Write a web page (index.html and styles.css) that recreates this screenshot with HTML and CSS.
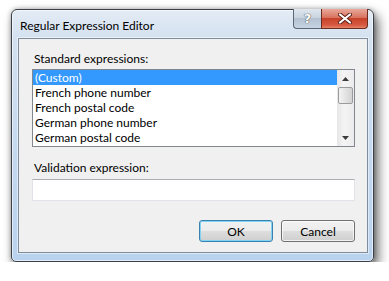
FILE: index.html
```html
<!DOCTYPE html>
<html lang="en">
<head>
    <meta charset="UTF-8">
    <meta name="viewport" content="width=device-width, initial-scale=1.0">
    <title>Regular Expression Editor</title>
    <link rel="stylesheet" href="styles.css">
</head>
<body>
    <div class="window">
        <div class="titlebar">
            <span class="title">Regular Expression Editor</span>
            <div class="caption-buttons">
                <div class="cap help">?</div>
                <div class="cap close">
                    <svg width="14" height="11" viewBox="0 0 14 11">
                        <path d="M2 1.5 L12 9.5 M12 1.5 L2 9.5" stroke="#5a1f14" stroke-width="4" stroke-linecap="round"/>
                        <path d="M2 1.5 L12 9.5 M12 1.5 L2 9.5" stroke="#ffffff" stroke-width="2.2" stroke-linecap="round"/>
                    </svg>
                </div>
            </div>
        </div>
        <div class="client">
            <div class="field-label">Standard expressions:</div>
            <div class="listbox">
                <ul class="items">
                    <li class="selected">(Custom)</li>
                    <li>French phone number</li>
                    <li>French postal code</li>
                    <li>German phone number</li>
                    <li>German postal code</li>
                </ul>
                <div class="scrollbar">
                    <div class="arrow">
                        <svg width="7" height="4" viewBox="0 0 7 4"><path d="M0 4 L3.5 0 L7 4 Z" fill="#3b3b3b"/></svg>
                    </div>
                    <div class="thumb"></div>
                    <div class="track"></div>
                    <div class="arrow">
                        <svg width="7" height="4" viewBox="0 0 7 4"><path d="M0 0 L7 0 L3.5 4 Z" fill="#3b3b3b"/></svg>
                    </div>
                </div>
            </div>
            <div class="field-label second">Validation expression:</div>
            <input class="textbox" type="text">
            <div class="actions">
                <button class="btn default">OK</button>
                <button class="btn">Cancel</button>
            </div>
        </div>
    </div>
</body>
</html>
```

FILE: styles.css
```css
body {
    margin: 0;
    background: #ffffff;
    font-family: "Segoe UI", Lato, sans-serif;
    font-size: 12px;
    color: #000000;
}
.window {
    box-sizing: border-box;
    width: 363px;
    height: 253px;
    margin: 9px 0 0 11px;
    padding: 0 5px 8px 6px;
    border: 1px solid #3a4049;
    border-radius: 6px 6px 5px 5px;
    background: linear-gradient(to bottom, #e4ebf4 0, #d3e1f0 28px, #c3d8ef 60%, #b9d2ee 100%);
    box-shadow: inset 0 0 0 1px rgba(255, 255, 255, 0.6), 4px 6px 12px rgba(0, 0, 0, 0.6), 0 0 5px rgba(0, 0, 0, 0.3);
}
.titlebar {
    display: flex;
    height: 28px;
}
.title {
    flex: 1;
    padding: 8px 0 0 2px;
    line-height: 15px;
    color: #000000;
}
.caption-buttons {
    display: flex;
    align-self: flex-start;
    margin-top: -1px;
}
.cap {
    box-sizing: border-box;
    height: 20px;
    border: 1px solid #5b6775;
    border-top: none;
    display: flex;
    align-items: center;
    justify-content: center;
}
.help {
    width: 28px;
    border-right: none;
    border-radius: 0 0 0 4px;
    background: linear-gradient(to bottom, #dfe6ee 0, #c9d4e0 45%, #b3c1d1 50%, #c6d4e3 100%);
    color: #ffffff;
    font-family: "DejaVu Sans", sans-serif;
    font-size: 13px;
    font-weight: bold;
    text-shadow: 0 0 1px #444444, 0 0 1px #444444;
}
.close {
    width: 47px;
    border-radius: 0 0 4px 0;
    border-color: #6d2a1e;
    background: linear-gradient(to bottom, #e9a99b 0, #d9735f 45%, #c7432b 50%, #d75a3f 85%, #e6866b 100%);
}
.client {
    box-sizing: border-box;
    height: 215px;
    border: 1px solid #7f8c9d;
    background: #f0f0f0;
    padding: 12px 12px 10px 13px;
    box-shadow: 0 0 0 1px rgba(255, 255, 255, 0.5);
}
.field-label {
    line-height: 15px;
    padding-left: 2px;
}
.field-label.second {
    margin-top: 13px;
}
.listbox {
    display: flex;
    box-sizing: border-box;
    height: 78px;
    margin-top: 3px;
    border: 1px solid #828790;
    background: #ffffff;
}
.items {
    flex: 1;
    list-style: none;
    margin: 0;
    padding: 0;
}
.items li {
    height: 15px;
    line-height: 15px;
    padding-left: 2px;
}
.items li.selected {
    background: #3399ff;
    color: #ffffff;
}
.scrollbar {
    display: flex;
    flex-direction: column;
    width: 17px;
    background: linear-gradient(to right, #e6e6e6, #f4f4f4 40%, #ececec);
}
.arrow {
    height: 17px;
    display: flex;
    align-items: center;
    justify-content: center;
}
.thumb {
    box-sizing: border-box;
    height: 17px;
    margin: 0 1px;
    border: 1px solid #9b9b9b;
    border-radius: 2px;
    background: linear-gradient(to right, #f3f3f3, #e3e3e3 50%, #d3d3d3);
}
.track {
    flex: 1;
}
.textbox {
    display: block;
    box-sizing: border-box;
    width: 100%;
    height: 22px;
    margin: 4px 0 0 0;
    border: 1px solid #e2e3ea;
    border-top-color: #abadb3;
    background: #ffffff;
}
.actions {
    display: flex;
    justify-content: flex-end;
    gap: 8px;
    margin-top: 19px;
}
.btn {
    box-sizing: border-box;
    width: 74px;
    height: 22px;
    border: 1px solid #707070;
    border-radius: 3px;
    background: linear-gradient(to bottom, #f2f2f2 0, #ebebeb 50%, #dddddd 51%, #cfcfcf 100%);
    box-shadow: inset 0 0 0 1px rgba(255, 255, 255, 0.7);
    font-family: inherit;
    font-size: 12px;
    color: #000000;
    padding: 0;
}
.btn.default {
    border-color: #3c7fb1;
    box-shadow: inset 0 0 0 1px #7fd3f3;
}
```
